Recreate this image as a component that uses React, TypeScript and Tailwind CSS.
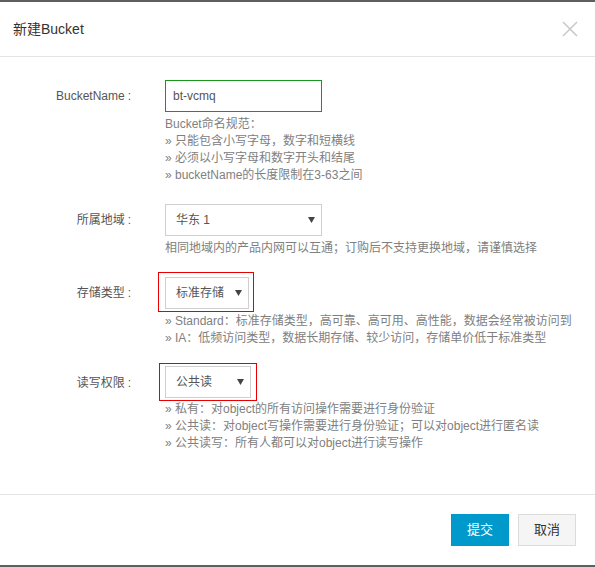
import React from "react";

const Label = ({ children, className = "" }: { children: React.ReactNode; className?: string }) => (
  <div className={"w-[131px] shrink-0 text-right leading-[32px] text-[#555] " + className}>
    {children}
    <span className="ml-[3px]">:</span>
  </div>
);

const Arrow = () => (
  <svg width="7" height="6" viewBox="0 0 7 6" className="shrink-0">
    <path d="M0 0h7L3.5 6z" fill="#444" />
  </svg>
);

const Select = ({ value, className = "" }: { value: string; className?: string }) => (
  <div
    className={
      "flex items-center justify-between border border-[#cfcfcf] bg-white pl-[10px] pr-[6px] text-[12px] text-[#555] " +
      className
    }
  >
    <span>{value}</span>
    <Arrow />
  </div>
);

export default function App() {
  return (
    <div className="w-[595px] h-[567px] flex flex-col bg-white border-t-2 border-b-2 border-[#5f5f5f] text-[12px] font-['Liberation_Sans','Noto_Sans_CJK_SC',sans-serif]">
      <div className="h-[55px] shrink-0 flex items-center justify-between pl-[13px] pr-[17px] border-b border-[#e5e5e5]">
        <span className="text-[14px] text-[#333]">新建Bucket</span>
        <svg width="16" height="16" viewBox="0 0 16 16">
          <path d="M1 1l14 14M15 1L1 15" stroke="#c8c8c8" strokeWidth="1.5" />
        </svg>
      </div>

      <div className="flex-1 pt-[23px]">
        {/* BucketName */}
        <div className="flex">
          <Label>BucketName</Label>
          <div className="ml-[34px]">
            <div className="w-[157px] h-[32px] border border-[#1a961a] pl-[7px] leading-[30px] text-[12px] text-[#555]">
              bt-vcmq
            </div>
            <div className="mt-[4px] leading-[17px] text-[#808080]">
              <p>Bucket命名规范：</p>
              <p>» 只能包含小写字母，数字和短横线</p>
              <p>» 必须以小写字母和数字开头和结尾</p>
              <p>» bucketName的长度限制在3-63之间</p>
            </div>
          </div>
        </div>

        {/* region */}
        <div className="flex mt-[20px]">
          <Label>所属地域</Label>
          <div className="ml-[34px]">
            <Select value="华东 1" className="w-[157px] h-[32px]" />
            <p className="mt-[4px] leading-[17px] text-[#808080]">
              相同地域内的产品内网可以互通；订购后不支持更换地域，请谨慎选择
            </p>
          </div>
        </div>

        {/* storage type */}
        <div className="flex mt-[15px]">
          <Label className="pt-[5px]">存储类型</Label>
          <div className="ml-[27px]">
            <div className="w-[96px] h-[40px] border border-[#e60000] pl-[6px] pt-[4px]">
              <Select value="标准存储" className="w-[84px] h-[32px]" />
            </div>
            <div className="ml-[7px] mt-[1px] leading-[17px] text-[#808080]">
              <p>» Standard：标准存储类型，高可靠、高可用、高性能，数据会经常被访问到</p>
              <p>» IA：低频访问类型，数据长期存储、较少访问，存储单价低于标准类型</p>
            </div>
          </div>
        </div>

        {/* acl */}
        <div className="flex mt-[16px]">
          <Label className="pt-[4px]">读写权限</Label>
          <div className="ml-[28px]">
            <div className="w-[98px] h-[38px] border border-[#e60000] pl-[5px] pt-[2px]">
              <Select value="公共读" className="w-[86px] h-[32px]" />
            </div>
            <div className="ml-[6px] leading-[17px] text-[#808080]">
              <p>» 私有：对object的所有访问操作需要进行身份验证</p>
              <p>» 公共读：对object写操作需要进行身份验证；可以对object进行匿名读</p>
              <p>» 公共读写：所有人都可以对object进行读写操作</p>
            </div>
          </div>
        </div>
      </div>

      <div className="h-[71px] shrink-0 border-t border-[#e5e5e5] flex items-center justify-end gap-[9px] pr-[19px]">
        <button className="w-[58px] h-[32px] bg-[#0099cc] text-white text-[13px]">提交</button>
        <button className="w-[58px] h-[32px] bg-[#f5f5f5] border border-[#dcdcdc] text-[#333] text-[13px]">取消</button>
      </div>
    </div>
  );
}
